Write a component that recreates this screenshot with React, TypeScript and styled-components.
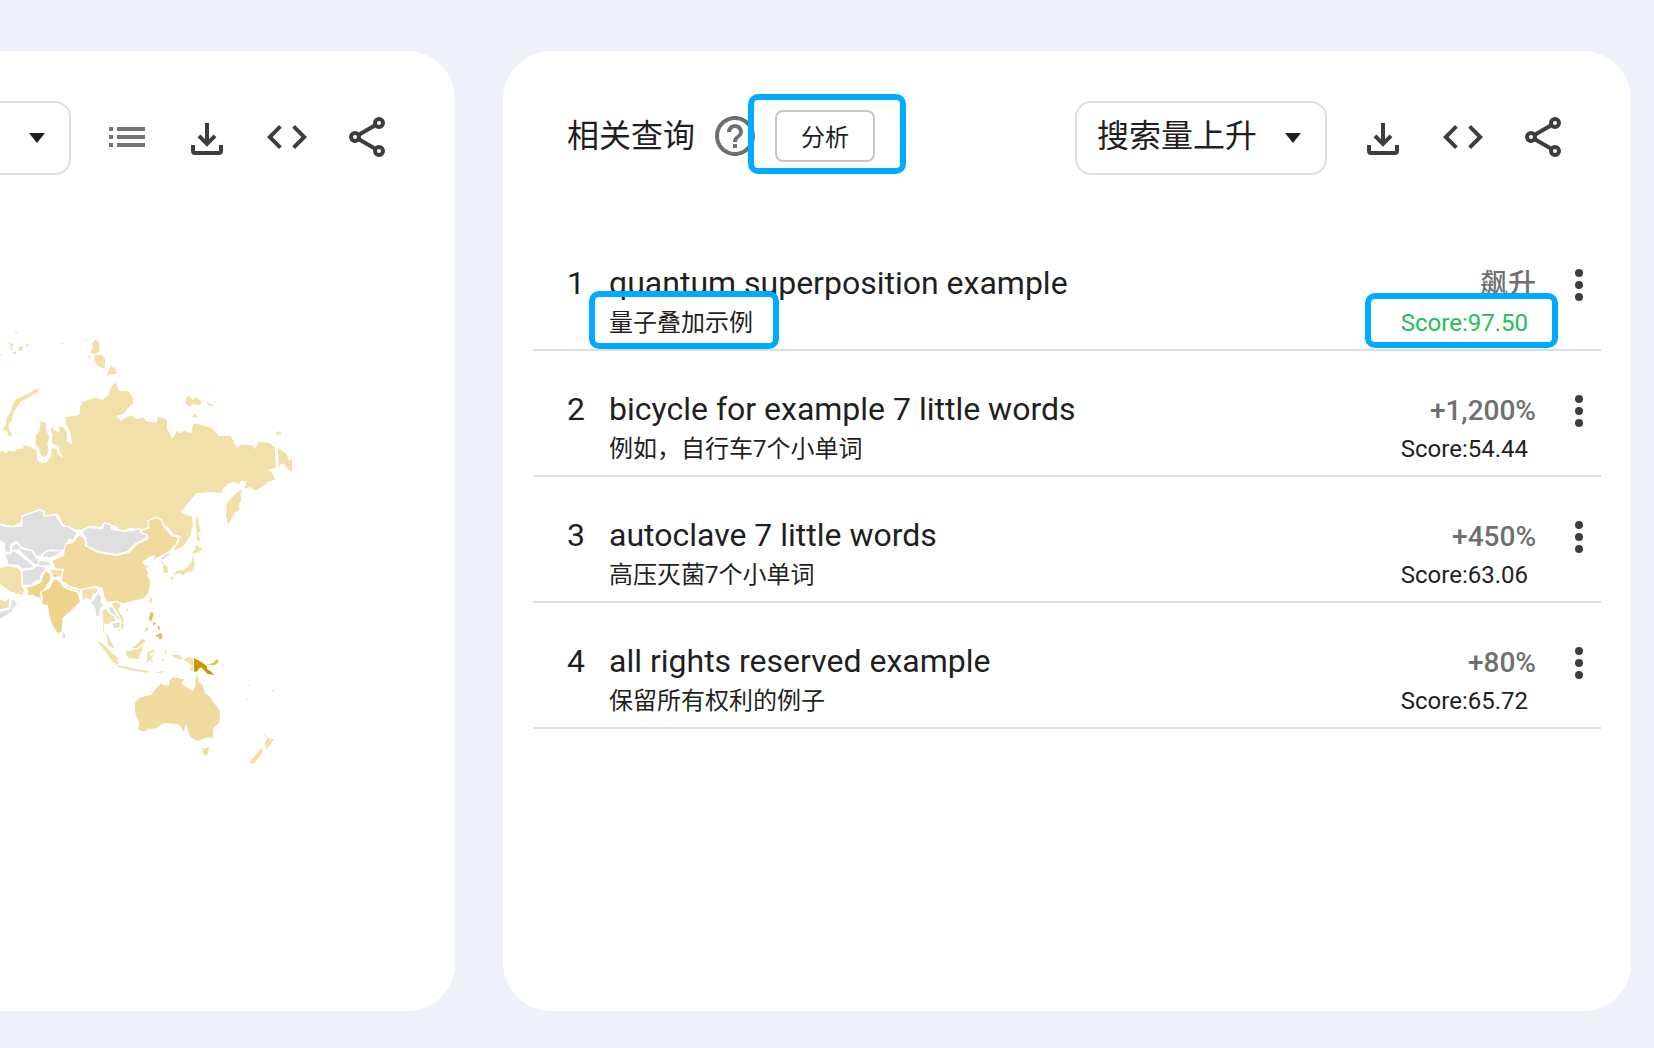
import React from "react";
import styled, { createGlobalStyle } from "styled-components";

const GlobalStyle = createGlobalStyle`
  *, *::before, *::after { box-sizing: border-box; }
  body {
    margin: 0;
    background: #eef1fa;
    color: #1f1f1f;
    font-family: Roboto, "Noto Sans CJK SC", sans-serif;
  }
  button, select { font: inherit; color: inherit; }
`;

const Page = styled.main`
  display: grid;
  grid-template-columns: 455fr 1128fr;
  gap: 48px;
  min-height: 100vh;
  padding: 51px 23px 37px 0;
`;

const Card = styled.section<{ $cut?: boolean }>`
  min-width: 0;
  background: #fff;
  border-radius: ${(p) => (p.$cut ? "0 48px 48px 0" : "48px")};
`;

const Header = styled.header<{ $cut?: boolean }>`
  display: flex;
  justify-content: space-between;
  gap: 32px;
  padding: 50px 64px 0 ${(p) => (p.$cut ? "0" : "64px")};
`;

const TitleGroup = styled.div`
  display: flex;
  align-items: center;
  gap: 16px;
  padding-bottom: 4px;
`;

const Title = styled.h2`
  margin: 0;
  font-size: 32px;
  line-height: 40px;
  font-weight: 400;
`;

const Tools = styled.div`
  display: flex;
  gap: 32px;

  > button { margin-bottom: 2px; }
`;

const IconButton = styled.button<{ $muted?: boolean }>`
  display: block;
  flex: none;
  align-self: center;
  width: 48px;
  height: 48px;
  padding: 0;
  border: 0;
  background: none;
  color: ${(p) => (p.$muted ? "#6e706f" : "#3c3e3d")};
  cursor: pointer;

  svg { display: block; width: 100%; height: 100%; }
`;

const MenuButton = styled(IconButton)`
  align-self: start;
  width: 44px;
  margin-top: -2px;
`;

const SelectBox = styled.div<{ $cut?: boolean }>`
  display: grid;
  align-items: center;
  flex: ${(p) => (p.$cut ? "1" : "none")};
  width: ${(p) => (p.$cut ? "auto" : "252px")};
  min-width: 0;

  > * { grid-area: 1 / 1; }
  > svg {
    justify-self: end;
    width: 16px;
    height: 10px;
    margin-right: 26px;
    pointer-events: none;
  }
`;

const Select = styled.select<{ $cut?: boolean }>`
  appearance: none;
  width: 100%;
  height: 74px;
  padding: 0 48px 4px ${(p) => (p.$cut ? "0" : "20px")};
  border: 2px solid #dedfdf;
  border-left-width: ${(p) => (p.$cut ? "0" : "2px")};
  border-radius: ${(p) => (p.$cut ? "0 16px 16px 0" : "16px")};
  background: #fff;
  font-size: 32px;
`;

const Anchor = styled.span`
  position: relative;
  display: inline-block;
`;

const Highlight = styled.span<{ $inset: string }>`
  position: absolute;
  inset: ${(p) => p.$inset};
  border: 6px solid #00aaff;
  border-radius: 10px;
  pointer-events: none;
`;

const AnalyzeButton = styled.button`
  display: block;
  width: 100px;
  height: 52px;
  padding: 0 0 2px;
  border: 2px solid #c6c6c6;
  border-radius: 8px;
  background: #fff;
  font-size: 24px;
  cursor: pointer;
`;

const List = styled.ol`
  margin: 50px 30px 0;
  padding: 0;
  list-style: none;
`;

const Row = styled.li`
  display: grid;
  grid-template-columns: 42px 1fr auto 44px;
  padding: 38px 0 6px 34px;
  border-bottom: 2px solid #dedfdf;
`;

const Rank = styled.span`
  font-size: 32px;
  line-height: 40px;
`;

const Query = styled.a`
  display: block;
  color: inherit;
  font-size: 32px;
  line-height: 40px;
  text-decoration: none;
`;

const Translation = styled(Anchor)`
  display: block;
  width: fit-content;
  font-size: 24px;
  line-height: 40px;
`;

const Stats = styled.div`
  display: flex;
  flex-direction: column;
  align-items: flex-end;
  margin-right: 21px;
`;

const Change = styled.span`
  color: #6e706f;
  font-size: 28px;
  line-height: 44px;
  font-weight: 500;
`;

const Score = styled(Anchor)<{ $good: boolean }>`
  margin-right: 8px;
  color: ${(p) => (p.$good ? "#22c05a" : "#1f1f1f")};
  font-size: 24px;
  line-height: 32px;
`;

const MapDrawing = styled.svg`
  display: block;
  width: 310px;
  height: 460px;
  margin-top: 145px;
`;

const Caret = () => (
  <svg viewBox="0 0 16 10" aria-hidden="true">
    <path d="M0 0h16L8 10z" fill="#1f1f1f" />
  </svg>
);

const ListIcon = () => (
  <svg viewBox="0 0 24 24" fill="#757575">
    <path d="M3 7h2v2H3zM3 11h2v2H3zM3 15h2v2H3zM7 7h14v2H7zM7 11h14v2H7zM7 15h14v2H7z" />
  </svg>
);

const DownloadIcon = () => (
  <svg viewBox="0 0 24 24" fill="none" stroke="currentColor" strokeWidth="2">
    <path d="M12 5v10M8 11.4l4 4 4-4M5 16v3a1 1 0 0 0 1 1h12a1 1 0 0 0 1-1v-3" />
  </svg>
);

const CodeIcon = () => (
  <svg viewBox="0 0 24 24" fill="currentColor">
    <path d="M9.4 16.6 4.8 12l4.6-4.6L8 6l-6 6 6 6zM14.6 16.6l4.6-4.6-4.6-4.6L16 6l6 6-6 6z" />
  </svg>
);

const ShareIcon = () => (
  <svg viewBox="0 0 24 24" fill="none" stroke="currentColor" strokeWidth="2">
    <circle cx="18" cy="5" r="2" />
    <circle cx="18" cy="19" r="2" />
    <circle cx="6" cy="12" r="2" />
    <path d="M7.7 11 16.3 6M7.7 13l8.6 5" />
  </svg>
);

const HelpIcon = () => (
  <svg viewBox="0 0 24 24" fill="currentColor">
    <path d="M11 18h2v-2h-2v2zm1-16C6.48 2 2 6.48 2 12s4.480 10 10 10 10-4.480 10-10S17.520 2 12 2zm0 18c-4.410 0-8-3.590-8-8s3.590-8 8-8 8 3.590 8 8-3.590 8-8 8zm0-14c-2.210 0-4 1.790-4 4h2c0-1.100.9-2 2-2s2 .9 2 2c0 2-3 1.750-3 5h2c0-2.250 3-2.500 3-5 0-2.210-1.790-4-4-4z" />
  </svg>
);

const MoreIcon = () => (
  <svg viewBox="1 0 22 24" fill="currentColor">
    <circle cx="12" cy="6" r="2" />
    <circle cx="12" cy="12" r="2" />
    <circle cx="12" cy="18" r="2" />
  </svg>
);

const SAND = "#f2e0aa";
const WHEAT = "#f0da9e";
const GOLD = "#edd48c";
const AMBER = "#e3bb50";
const DEEP = "#cc9500";
const GREY = "#dfdfdf";

type Shape = [string, string];

const russia: Shape[] = [
  [SAND, "M-6 394 10 391 18 398 25 389 42 393 50 385 68 384 64 372 90 378 108 388 113 400 112 418 122 426 138 427 152 408 152 386 160 380 172 388 176 402 186 410 177 396 175 380 160 374 152 366 156 346 150 330 158 310 162 330 178 336 174 320 184 316 198 328 204 340 202 362 214 370 210 338 196 314 194 290 236 284 238 262 246 244 288 230 308 238 326 222 328 206 344 184 352 192 358 210 388 212 396 226 402 236 400 252 384 266 378 276 366 286 352 288 362 300 378 290 398 284 408 296 432 290 440 302 468 306 472 288 490 292 504 300 502 322 518 352 530 328 540 338 552 330 572 338 578 308 604 312 636 322 656 346 692 346 702 360 710 380 722 372 756 374 766 384 774 364 806 366 826 380 830 446 806 450 818 456 828 480 804 488 790 500 768 514 750 504 732 508 736 486 724 484 716 496 706 488 688 492 670 506 664 522 634 518 590 522 544 576 562 584 578 588 580 616 572 650 552 678 530 692 516 690 532 670 540 650 520 644 500 620 488 618 484 600 468 592 450 598 452 614 438 628 420 630 390 626 370 634 356 630 350 620 330 616 314 608 304 622 268 620 244 632 224 630 206 622 190 616 172 582 160 586 130 588 132 574 118 570 90 580 70 586 68 604 56 612 40 620 16 616 -6 608z"],
];

const northIslands: Shape[] = [
  [SAND, "M834 384 860 402 866 422 876 414 876 454 862 446 852 432 842 432 836 446z"],
  [SAND, "M108 206 116 206 114 216 96 226 76 238 62 246 50 262 40 280 36 298 26 314 26 328 38 346 26 348 20 332 6 328 18 314 20 294 30 280 36 258 46 240 62 232 82 222 94 216z"],
  [SAND, "M122 304 138 308 138 330 148 352 142 372 146 392 140 406 132 412 122 404 116 384 106 374 108 346 118 332z"],
  [SAND, "M288 58 298 70 298 96 284 102 270 98 278 84 276 68zM284 104 306 106 316 116 314 146 294 138 284 126zM262 108 272 106 270 116zM334 134 340 146 344 140 350 158 346 162 330 162 318 170z"],
  [SAND, "M558 234 566 226 580 242 584 230 606 244 598 256 582 252 566 260 556 248zM616 244 632 252 642 258 626 258zM586 280 594 294 576 290zM828 338 838 334 846 342 828 344z"],
  [SAND, "M24 68 44 74 36 80zM22 74 40 86 36 90zM56 80 70 78 66 92 56 92zM76 76 90 68 84 80zM36 96 50 96 44 104zM42 37 54 37 50 41zM182 70 192 70 188 74zM0 102 5 104 0 107zM254 60 264 60 260 64zM356 164 364 168 358 168zM196 248 202 246 200 250zM630 211 636 211 634 214z"],
  [SAND, "M730 508 722 520 724 544 716 552 718 570 704 580 684 614 678 584 680 548 692 538 712 516z"],
  [SAND, "M590 584 596 608 602 634 594 640 602 662 590 662 590 634 586 610z"],
];

const countries: Shape[] = [
  [GREY, "M-6 72 18 80 40 80 66 78 66 48 90 40 118 30 132 34 132 48 166 44 188 78 206 80 232 98 222 118 206 120 196 150 176 152 150 150 132 158 122 170 108 168 98 152 64 142 50 124 32 134 32 158 14 156 14 130 -6 120z"],
  [GREY, "M14 162 32 160 40 150 62 166 104 200 92 204 66 208 54 196 24 194z"],
  [GREY, "M36 136 50 128 64 146 96 152 108 174 124 178 118 192 106 196 74 168 56 150 36 152z"],
  [GREY, "M126 164 144 152 192 152 176 162 150 174 128 172zM116 180 148 184 154 198 132 198 114 200z"],
  [GREY, "M66 210 92 208 112 196 132 200 136 210 122 226 122 238 102 248 94 256 66 256z"],
  [GREY, "M244 94 264 82 306 86 314 68 332 74 336 88 372 94 406 90 418 84 424 98 440 104 442 114 408 130 384 154 350 164 296 154 260 138 258 114z"],
  [WHEAT, "M154 182 190 166 196 132 220 126 236 104 256 116 256 136 292 156 350 166 388 156 410 132 444 116 440 104 422 98 424 90 446 84 444 62 468 52 484 58 492 80 516 108 534 110 530 132 516 144 514 152 498 162 472 174 464 182 458 178 464 168 450 172 430 186 436 196 458 194 440 206 448 220 442 226 454 246 446 280 432 296 400 304 370 312 346 304 320 308 310 286 306 264 284 260 244 270 210 260 184 244 186 210 166 206z"],
  [SAND, "M-6 206 20 196 54 202 64 214 66 256 74 270 70 286 52 284 32 276 18 268 -6 250z"],
  [SAND, "M-6 294 16 302 30 290 28 324 -6 332z"],
  [GREY, "M34 294 54 310 44 322 34 338 -6 362 -6 336 30 326z"],
  [GOLD, "M138 212 152 222 152 240 138 262 124 280 124 296 108 292 96 286 78 286 84 274 76 262 102 256 124 244 126 228z"],
  [SAND, "M192 250 214 264 242 270 240 280 206 270zM244 268 286 262 298 272 280 286 274 304 260 296 246 302zM146 206 168 208 190 210 184 232 160 232z"],
  [GOLD, "M166 236 180 244 190 260 208 268 234 276 242 306 218 330 190 354 186 398 172 402 158 380 148 354 142 318 122 312 128 298 122 276 148 264 156 244z"],
  [GREY, "M294 276 306 290 304 304 312 316 302 326 298 350 288 350 284 324 270 308 282 296z"],
  [SAND, "M306 330 320 326 330 340 346 348 348 364 334 366 324 376 314 372 314 396 328 408 340 442 326 434 320 414 308 396z"],
  [SAND, "M334 308 352 304 366 314 356 328 372 352 374 380 356 396 350 394 364 372 354 342 338 324z"],
  [GREY, "M322 318 338 320 346 336 362 358 356 364 344 348 330 338zM334 370 362 364 360 384 342 388z"],
  [GREY, "M514 152 508 168 490 180 492 194 480 192 486 180 474 176z"],
  [SAND, "M376 450 394 450 408 444 428 430 430 448 420 468 418 480 384 476 376 464z"],
  [WHEAT, "M388 446 412 430 424 414 440 422 430 432 412 446z"],
  [SAND, "M546 478 564 468 582 474 580 514 560 510 574 500 562 488z"],
];

const southIslands: Shape[] = [
  [AMBER, "M160 226 170 226 164 231z"],
  [SAND, "M188 396 198 406 194 416 188 414z"],
  [SAND, "M288 421 312 434 334 458 354 474 354 496 336 484 318 456zM352 496 380 500 420 510 446 513 440 519 390 510 354 500z"],
  [WHEAT, "M322 416 336 430 344 446 324 436z"],
  [SAND, "M442 456 462 449 466 453 448 462 452 468 462 464 454 476 462 490 448 480 440 492zM468 517 494 512 482 520zM494 448 501 456 496 462zM514 464 540 464 548 480 524 474zM484 478 498 480 488 484z"],
  [DEEP, "M582 474 604 486 620 498 622 508 632 514 643 525 622 521 604 502 594 508 594 514 582 515z"],
  [AMBER, "M620 494 640 489 650 477 657 486 644 495zM668 492 673 496 669 495z"],
  [AMBER, "M452 336 461 340 456 364 446 358zM458 366 469 370 460 377zM472 374 481 384 476 392zM442 382 431 398 444 388zM464 408 476 402 484 398 488 412 480 419 474 410z"],
  [SAND, "M376 326 385 328 380 335zM452 289 457 300 452 312 447 302z"],
  [SAND, "M490 190 502 200 504 218 490 220z"],
  [SAND, "M578 168 585 190 578 214 560 216 550 226 540 219 518 226 530 212 552 210 566 198 574 186zM588 134 608 148 590 160 574 160 584 150zM510 230 522 230 514 244z"],
  [WHEAT, "M404 606 424 592 454 584 464 570 484 550 496 558 508 554 508 542 520 532 552 538 544 552 578 574 586 556 588 528 594 530 596 546 608 556 614 580 628 588 640 606 660 632 658 668 640 684 638 714 620 712 608 718 594 724 572 712 560 682 560 670 550 694 538 674 500 668 482 674 466 686 444 686 432 695 414 688 418 668 406 640z"],
  [WHEAT, "M604 742 612 746 627 742 624 760 614 768z"],
  [SAND, "M786 693 796 704 804 714 822 718 812 734 799 748 794 728 802 716zM784 743 788 756 772 778 764 791 747 790 764 768z"],
  [SAND, "M744 552 751 558 746 557zM814 573 822 568 820 575zM826 564 833 562 828 567zM696 508 708 513 700 511zM734 593 748 601 740 600zM742 32 747 38 743 36z"],
];

const Shapes = ({ of, border }: { of: Shape[]; border?: boolean }) => (
  <g stroke={border ? "#fff" : "none"} strokeWidth="4" strokeLinejoin="round">
    {of.map(([fill, d]) => (
      <path key={d} d={d} fill={fill} />
    ))}
  </g>
);

const queries = [
  { text: "quantum superposition example", translation: "量子叠加示例", change: "飙升", score: "97.50" },
  { text: "bicycle for example 7 little words", translation: "例如，自行车7个小单词", change: "+1,200%", score: "54.44" },
  { text: "autoclave 7 little words", translation: "高压灭菌7个小单词", change: "+450%", score: "63.06" },
  { text: "all rights reserved example", translation: "保留所有权利的例子", change: "+80%", score: "65.72" },
];

const ShareTools = () => (
  <>
    <IconButton type="button" aria-label="download"><DownloadIcon /></IconButton>
    <IconButton type="button" aria-label="embed"><CodeIcon /></IconButton>
    <IconButton type="button" aria-label="share"><ShareIcon /></IconButton>
  </>
);

export default function App() {
  return (
    <>
      <GlobalStyle />
      <Page>
        <Card $cut>
          <Header $cut>
            <SelectBox $cut>
              <Select $cut aria-label="region">
                <option></option>
              </Select>
              <Caret />
            </SelectBox>
            <Tools>
              <IconButton type="button" aria-label="list"><ListIcon /></IconButton>
              <ShareTools />
            </Tools>
          </Header>
          <MapDrawing viewBox="0 0 930 1380" role="img" aria-label="map">
            <Shapes of={russia} border />
            <Shapes of={northIslands} />
            <g transform="translate(0 540)">
              <Shapes of={countries} border />
              <Shapes of={southIslands} />
            </g>
          </MapDrawing>
        </Card>

        <Card>
          <Header>
            <TitleGroup>
              <Title>相关查询</Title>
              <IconButton type="button" $muted aria-label="help"><HelpIcon /></IconButton>
              <Anchor>
                <AnalyzeButton type="button">分析</AnalyzeButton>
                <Highlight $inset="-16px -31px -12px -27px" />
              </Anchor>
            </TitleGroup>
            <Tools>
              <SelectBox>
                <Select aria-label="sort">
                  <option>搜索量上升</option>
                </Select>
                <Caret />
              </SelectBox>
              <ShareTools />
            </Tools>
          </Header>
          <List>
            {queries.map((q, i) => (
              <Row key={q.text}>
                <Rank>{i + 1}</Rank>
                <div>
                  <Query href="#">{q.text}</Query>
                  <Translation>
                    {q.translation}
                    {i === 0 && <Highlight $inset="-12px -26px -6px -20px" />}
                  </Translation>
                </div>
                <Stats>
                  <Change>{q.change}</Change>
                  <Score $good={i === 0}>
                    Score:{q.score}
                    {i === 0 && <Highlight $inset="-14px -30px -9px -36px" />}
                  </Score>
                </Stats>
                <MenuButton type="button" aria-label="more"><MoreIcon /></MenuButton>
              </Row>
            ))}
          </List>
        </Card>
      </Page>
    </>
  );
}
